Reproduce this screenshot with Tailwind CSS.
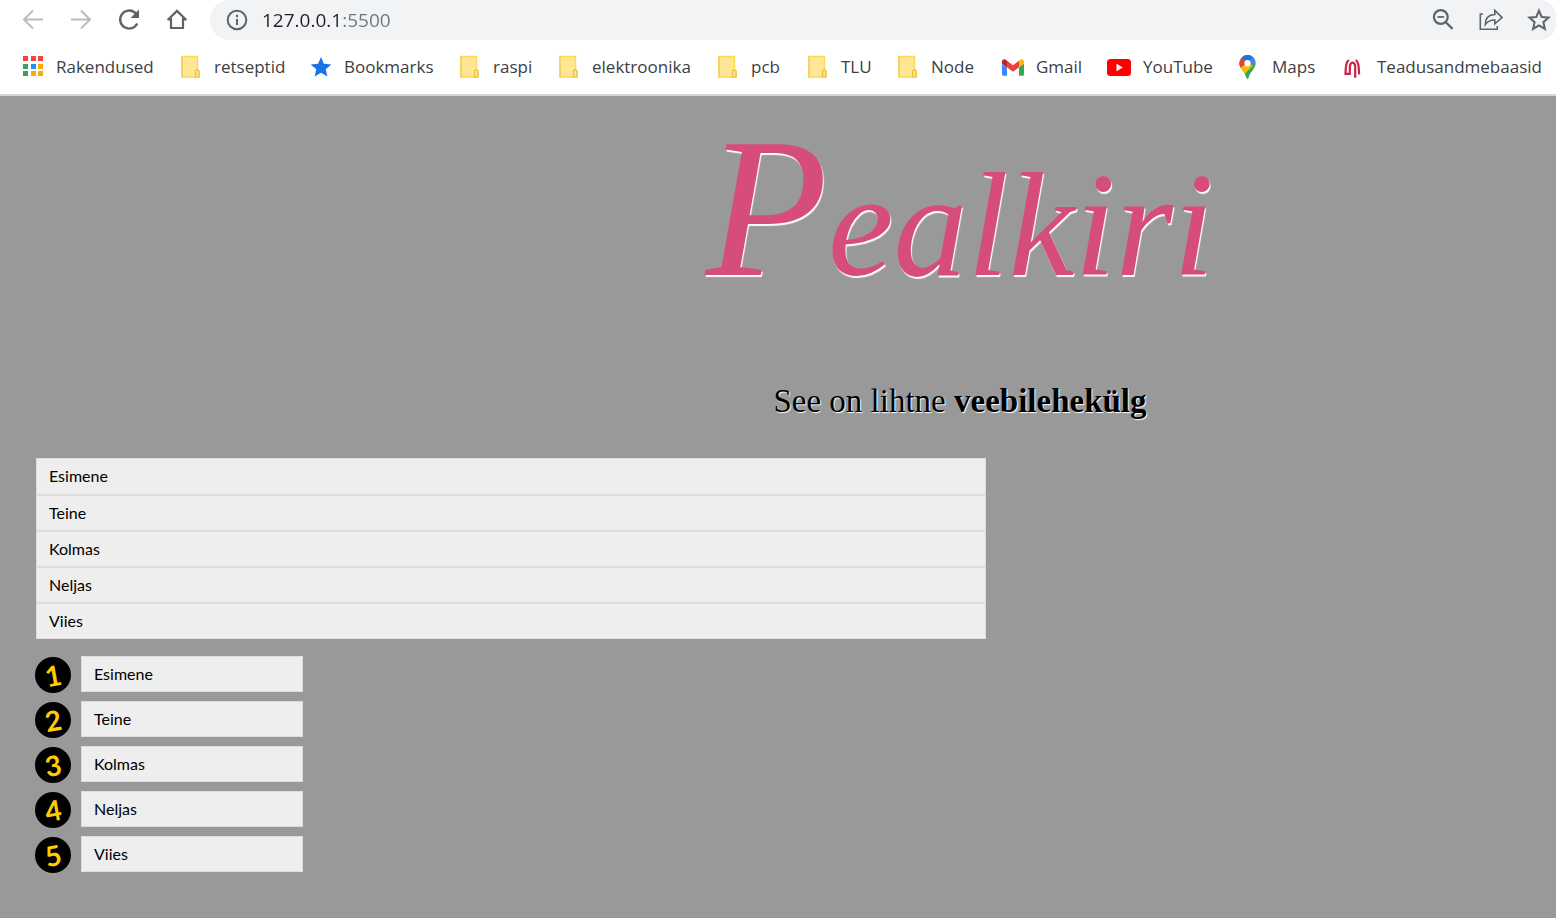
<!DOCTYPE html>
<html lang="et">
<head>
<meta charset="utf-8">
<title>127.0.0.1:5500</title>
<script src="https://cdn.jsdelivr.net/npm/@tailwindcss/browser@4"></script>
</head>
<body class="flex min-h-screen flex-col overflow-x-hidden bg-[#999999] text-black">
<svg class="hidden" aria-hidden="true">
  <symbol id="folder" viewBox="0 0 20 24">
    <path d="M1 1.500h15.500v13.500l1.500 1v6H1z" fill="#ffe694" stroke="#fcd853" stroke-width="1.400"/>
    <path d="M1 1v21.500" stroke="#f0cd5c" stroke-width="1.400"/>
    <path d="M14.500 22v-6q1.700-2.200 3.500 0v6z" fill="#ffe48a" stroke="#e9bf3c" stroke-width="1.200"/>
  </symbol>
</svg>
<header class="border-b-2 border-[#d5d6d8] bg-white">
  <div class="flex h-10 items-center">
    <nav class="flex w-[210px] shrink-0 items-center gap-6 pl-[21px]" aria-label="Navigeerimine">
      <button class="size-6" aria-label="Tagasi"><svg viewBox="0 0 24 24" fill="none" stroke="#babcbe" stroke-width="2"><path d="M22 11.500H3.500M12 2.500l-9 9 9 9"/></svg></button>
      <button class="size-6" aria-label="Edasi"><svg viewBox="0 0 24 24" fill="none" stroke="#babcbe" stroke-width="2"><path d="M2 11.500h18.500M12 2.500l9 9-9 9"/></svg></button>
      <button class="size-6" aria-label="Laadi uuesti"><svg viewBox="0 0 24 24" fill="none"><path d="M20.300 15.500A9 9 0 1 1 18 4.700L20 7" stroke="#5f6368" stroke-width="2.400"/><path d="M22 1.500v8.500h-8.500z" fill="#5f6368"/></svg></button>
      <button class="size-6" aria-label="Avaleht"><svg viewBox="0 0 24 24" fill="none" stroke="#5f6368" stroke-width="2.200"><path d="M2.700 12 12 2.900 21.300 12M6 10v10h12V10M2.500 11.300H6M18 11.300h3.500"/></svg></button>
    </nav>
    <div class="flex h-10 min-w-0 flex-1 items-center rounded-l-[20px] rounded-r-2xl bg-[#f1f3f4] pl-4">
      <svg class="size-[22px] shrink-0" viewBox="0 0 22 22" fill="none" stroke="#5f6368" stroke-width="2"><circle cx="11" cy="11" r="9.300"/><path d="M11 10v6M11 5.800v2.400"/></svg>
      <input class="ml-3.5 min-w-0 flex-1 bg-[linear-gradient(to_right,#202124_80px,#70757a_80px)] bg-clip-text font-['Open_Sans',sans-serif] text-[19px] text-transparent outline-none" aria-label="Aadressiriba" value="127.0.0.1:5500">
      <div class="flex shrink-0 items-center gap-6 pr-[5px]">
        <button class="size-6" aria-label="Suum"><svg viewBox="0 0 24 24" fill="none" stroke="#5f6368" stroke-width="2.200"><circle cx="9.800" cy="9" r="6.900"/><path d="m14.800 14.200 6.700 6.700"/><path d="M6.500 9h6.600" stroke-width="1.800"/></svg></button>
        <button class="size-6" aria-label="Jaga"><svg viewBox="0 0 24 24" fill="none" stroke="#5f6368" stroke-width="1.600"><path d="M4 6H1.300v15.200h17V18"/><path d="M6.300 16.500C6.300 10 10 6.800 15.800 6.500V2.500L23 9.500l-7.200 6.300V12c-4.200 0-7 1-9.500 4.500z"/></svg></button>
        <button class="size-6" aria-label="Lisa järjehoidja"><svg viewBox="0 0 24 24" fill="none" stroke="#5f6368" stroke-width="2"><path d="m12 2.600 2.700 6.400 6.900.6-5.200 4.600 1.500 6.700L12 17.400l-5.900 3.500 1.500-6.700-5.200-4.600L9.300 9z"/></svg></button>
      </div>
    </div>
  </div>
  <nav class="grid h-[54px] grid-cols-[158px_130px_149px_99px_159px_90px_90px_105px_105px_131px_105px_1fr] items-center pl-[22px] font-['Open_Sans',sans-serif] text-[17px] whitespace-nowrap text-[#3c4043]" aria-label="Järjehoidjad">
    <a href="#" class="flex items-center gap-3"><svg class="size-[22px] shrink-0" viewBox="0 0 22 22"><path d="M1 0h5v5H1zM9 0h5v5H9zM16 0h5v5h-5z" fill="#f9423a"/><path d="M1 8h5v5H1zM1 15h5v5H1z" fill="#34a160"/><path d="M9 8h5v5H9z" fill="#2090f8"/><path d="M16 8h5v5h-5zM9 15h5v5H9zM16 15h5v5h-5z" fill="#f9a90b"/></svg>Rakendused</a>
    <a href="#" class="flex items-center gap-3"><svg class="h-6 w-[22px] shrink-0"><use href="#folder"/></svg>retseptid</a>
    <a href="#" class="flex items-center gap-3"><svg class="size-[22px] shrink-0" viewBox="0 0 22 22"><path d="m11 1 2.900 6.800 7.400.6-5.600 4.900 1.700 7.200L11 16.700l-6.400 3.800 1.700-7.200L.7 8.400l7.400-.6z" fill="#1a73e8"/></svg>Bookmarks</a>
    <a href="#" class="flex items-center gap-3"><svg class="h-6 w-[22px] shrink-0"><use href="#folder"/></svg>raspi</a>
    <a href="#" class="flex items-center gap-3"><svg class="h-6 w-[22px] shrink-0"><use href="#folder"/></svg>elektroonika</a>
    <a href="#" class="flex items-center gap-3"><svg class="h-6 w-[22px] shrink-0"><use href="#folder"/></svg>pcb</a>
    <a href="#" class="flex items-center gap-3"><svg class="h-6 w-[22px] shrink-0"><use href="#folder"/></svg>TLU</a>
    <a href="#" class="flex items-center gap-3"><svg class="h-6 w-[22px] shrink-0"><use href="#folder"/></svg>Node</a>
    <a href="#" class="flex items-center gap-3"><svg class="h-[17px] w-[22px] shrink-0" viewBox="52 42 88 66"><path fill="#4285f4" d="M58 108h14V74L52 59v43c0 3.320 2.690 6 6 6"/><path fill="#34a853" d="M120 108h14c3.320 0 6-2.690 6-6V59l-20 15"/><path fill="#fbbc04" d="M120 48v26l20-15v-8c0-7.420-8.470-11.650-14.400-7.200"/><path fill="#ea4335" d="M72 74V48l24 18 24-18v26L96 92"/><path fill="#c5221f" d="M52 51v8l20 15V48l-5.600-4.200c-5.940-4.450-14.400-.22-14.400 7.200"/></svg>Gmail</a>
    <a href="#" class="flex items-center gap-3"><svg class="h-[17px] w-6 shrink-0" viewBox="0 0 24 17"><rect width="24" height="17" rx="3.500" fill="#f00"/><path d="m9.500 4.800 6.300 3.700-6.300 3.700z" fill="#fff"/></svg>YouTube</a>
    <a href="#" class="flex items-center gap-3"><svg class="h-6 w-[22px] shrink-0" viewBox="0 0 22 24"><defs><clipPath id="pin"><path d="M9.500 0a8.200 8.200 0 0 1 8.200 8.200c0 5.300-5.300 7.800-6.800 13.800q-1.400 4-2.800 0C6.600 16 1.300 13.500 1.300 8.200A8.200 8.200 0 0 1 9.500 0"/></clipPath></defs><g clip-path="url(#pin)"><path fill="#34a853" d="M0 0h22v24H0z"/><path fill="#4285f4" d="M9 8 17.500-1 22 3 9.500 13z"/><path fill="#1a73e8" d="M2 2 6-2h12L9.500 8z"/><path fill="#ea4335" d="M3.500 2.800 10 8.200 3 15-1 10z"/><path fill="#fbbc04" d="M9.500 8.200 1.500 13l4 7 9.500-9.500z"/><path fill="#4285f4" d="m9.500 8.200 6.500-7.200 2 3.500z"/></g><circle cx="9.500" cy="8.200" r="3.100" fill="#fff"/></svg>Maps</a>
    <a href="#" class="flex items-center gap-3"><svg class="h-6 w-[22px] shrink-0" viewBox="0 0 22 24" fill="none" stroke="#c8254b" stroke-width="2.200"><path d="m3.500 5.500 5.500-4 6 4" stroke="#e4f6f2" stroke-width="1.500"/><path d="M5.800 5C3 7.500 2.800 11 2.500 18.800h4.300V11.500q.4-3.500 2.700-4 2.500.5 2.700 4v11.300M12.800 5c2.800 2.500 3 6 3.300 14.500"/></svg>Teadusandmebaasid</a>
  </nav>
</header>
<main class="px-9 font-[Lato,sans-serif] text-base">
  <div class="flex flex-col items-center pl-[364px] font-['Liberation_Serif',serif] whitespace-nowrap [text-shadow:1px_1px_1px_#fff]">
    <h1 class="pt-3 text-[148px] leading-[200px] text-[#d64d7a] italic first-letter:text-[200px] [text-shadow:1px_2px_1px_#fff]">Pealkiri</h1>
    <p class="pt-14 text-[33px] leading-10">See on lihtne <strong>veebilehekülg</strong></p>
  </div>
  <ul class="mt-[37px] w-[64%]">
    <li class="h-[37px] border border-[#dddddd] bg-[#eeeeee] px-3 leading-[34px]">Esimene</li>
    <li class="h-9 border border-[#dddddd] bg-[#eeeeee] px-3 leading-[34px]">Teine</li>
    <li class="h-9 border border-[#dddddd] bg-[#eeeeee] px-3 leading-[34px]">Kolmas</li>
    <li class="h-9 border border-[#dddddd] bg-[#eeeeee] px-3 leading-[34px]">Neljas</li>
    <li class="h-9 border border-[#dddddd] bg-[#eeeeee] px-3 leading-[34px]">Viies</li>
  </ul>
  <ol class="-ml-px mt-[17px] flex flex-col gap-2 pb-8">
    <li class="flex h-[37px] items-start gap-2.5"><span class="flex size-9 items-center justify-center self-end rounded-full bg-black"><b class="-rotate-10 text-[28px] leading-9 text-[#ffcc00]">1</b></span><span class="h-9 w-[222px] border border-[#dddddd] bg-[#eeeeee] px-3 leading-[34px]">Esimene</span></li>
    <li class="flex h-[37px] items-start gap-2.5"><span class="flex size-9 items-center justify-center self-end rounded-full bg-black"><b class="-rotate-10 text-[28px] leading-9 text-[#ffcc00]">2</b></span><span class="h-9 w-[222px] border border-[#dddddd] bg-[#eeeeee] px-3 leading-[34px]">Teine</span></li>
    <li class="flex h-[37px] items-start gap-2.5"><span class="flex size-9 items-center justify-center self-end rounded-full bg-black"><b class="-rotate-10 text-[28px] leading-9 text-[#ffcc00]">3</b></span><span class="h-9 w-[222px] border border-[#dddddd] bg-[#eeeeee] px-3 leading-[34px]">Kolmas</span></li>
    <li class="flex h-[37px] items-start gap-2.5"><span class="flex size-9 items-center justify-center self-end rounded-full bg-black"><b class="-rotate-10 text-[28px] leading-9 text-[#ffcc00]">4</b></span><span class="h-9 w-[222px] border border-[#dddddd] bg-[#eeeeee] px-3 leading-[34px]">Neljas</span></li>
    <li class="flex h-[37px] items-start gap-2.5"><span class="flex size-9 items-center justify-center self-end rounded-full bg-black"><b class="-rotate-10 text-[28px] leading-9 text-[#ffcc00]">5</b></span><span class="h-9 w-[222px] border border-[#dddddd] bg-[#eeeeee] px-3 leading-[34px]">Viies</span></li>
  </ol>
</main>
</body>
</html>
